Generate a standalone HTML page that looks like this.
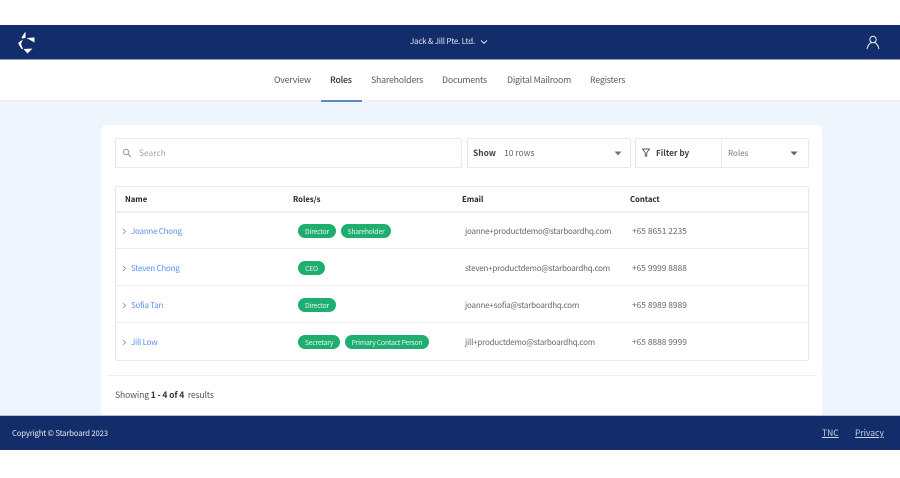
<!DOCTYPE html>
<html lang="en"><head><meta charset="utf-8"><title>Roles</title>
<style>
html,body{margin:0;padding:0;background:#fff}
#p{position:relative;width:900px;height:478px;overflow:hidden;background:#fff;font-family:"Noto Sans CJK SC","Liberation Sans",sans-serif;font-size:9px;color:#555;filter:blur(.25px)}
#p div,#p svg,#p a{position:absolute}
.t{white-space:nowrap;line-height:14px;height:14px}
.box{background:#fff;border:1px solid #e9e9e9;border-radius:2px;box-sizing:border-box}
.nav{font-size:8.8px;letter-spacing:-.22px;color:#5a5a5a;top:72.5px}
.th{font-size:7.7px;font-weight:700;color:#222;top:192.6px}
.nm{font-size:8px;letter-spacing:-.24px;color:#5c8ff5;margin-top:.8px}
.em{font-size:8px;letter-spacing:-.2px;color:#666;margin-top:.8px}
.ph{font-size:8.4px;color:#666}
.tag{background:#1fae6f;color:#e8f7f0;font-size:6.8px;letter-spacing:-.2px;height:14px;line-height:14px;border-radius:7px;text-align:center;white-space:nowrap}
.ln{background:#eeeeee;height:1px;left:116px;width:691.5px}
</style></head><body><div id="p">
<div style="left:0;top:25px;width:900px;height:34px;background:#122d69"></div>
<div style="left:0;top:59px;width:900px;height:1px;background:#8a97b8"></div>
<div style="left:0;top:101px;width:900px;height:315px;background:#eef5fd"></div>
<div style="left:0;top:100px;width:900px;height:2px;background:#eef0f3"></div>

<svg style="left:16px;top:31px" width="22" height="24" viewBox="0 0 22 24"><g fill="#fff"><path d="M9.500 .5 L5.500 6.500 L6 7.500 L9.500 7Z"/><path d="M10.500 7 L18.500 6.500 L18.500 11.500Z"/><path d="M7 8.500 L2.500 11.500 L2.500 13 L5.500 18 L7 18 L5 13Z"/><path d="M7.500 18 L16.500 17.500 L11.500 22.500Z"/></g></svg>

<div class="t" style="left:410px;top:35px;font-size:8px;letter-spacing:-.23px;color:#dfe5f0">Jack &amp; Jill Pte. Ltd.</div>
<svg style="left:480px;top:39px" width="8" height="6" viewBox="0 0 8 6"><path d="M1 1.500 L4 4.300 L7 1.500" fill="none" stroke="#dfe5f0" stroke-width="1"/></svg>
<svg style="left:866px;top:35px" width="14" height="15" viewBox="0 0 14 15"><circle cx="7" cy="4.500" r="3.200" fill="none" stroke="#eef1f7" stroke-width="1"/><path d="M1 14 C2 10 4 8 5.500 7.500 M13 14 C12 10 10 8 8.500 7.500" fill="none" stroke="#eef1f7" stroke-width="1"/></svg>

<div class="t nav" style="left:274px">Overview</div>
<div class="t nav" style="left:330px;color:#333;font-weight:500">Roles</div>
<div class="t nav" style="left:371px">Shareholders</div>
<div class="t nav" style="left:442px">Documents</div>
<div class="t nav" style="left:507px">Digital Mailroom</div>
<div class="t nav" style="left:590px">Registers</div>
<div style="left:321px;top:100px;width:41px;height:2px;background:#5f89c0"></div>

<div style="left:101px;top:125px;width:721px;height:291px;background:#fff;border-radius:5px 5px 0 5px"></div>

<div class="box" style="left:115px;top:138px;width:347px;height:30px"></div>
<svg style="left:122px;top:148px" width="10" height="10" viewBox="0 0 10 10"><circle cx="4" cy="4" r="2.700" fill="none" stroke="#999" stroke-width="1"/><path d="M6 6 L9 9" stroke="#999" stroke-width="1.200"/></svg>
<div class="t" style="left:139px;top:146px;font-size:8.400px;color:#a3a3a3">Search</div>

<div class="box" style="left:467px;top:138px;width:163.500px;height:30px"></div>
<div class="t" style="left:473px;top:146px;font-size:8.400px;font-weight:700;color:#444">Show</div>
<div class="t" style="left:504px;top:146.400px;font-size:8.500px;color:#666">10 rows</div>
<svg style="left:614px;top:151px" width="8" height="5" viewBox="0 0 8 5"><path d="M.5 .5 L7.500 .5 L4 4.500Z" fill="#777"/></svg>

<div class="box" style="left:635px;top:138px;width:173.500px;height:30px"></div>
<div style="left:721px;top:139px;width:1px;height:28px;background:#e9e9e9"></div>
<svg style="left:642px;top:148px" width="8" height="9" viewBox="0 0 8 9"><path d="M.5 1 L7.500 1 L4.800 4.500 L4.800 8 L3.200 8 L3.200 4.500Z" fill="none" stroke="#555" stroke-width=".9"/></svg>
<div class="t" style="left:656px;top:146.400px;font-size:8.200px;font-weight:700;color:#444">Filter by</div>
<div class="t" style="left:728px;top:146.500px;font-size:8px;color:#777">Roles</div>
<svg style="left:790px;top:151px" width="8" height="5" viewBox="0 0 8 5"><path d="M.5 .5 L7.500 .5 L4 4.500Z" fill="#666"/></svg>

<div class="box" style="left:115px;top:186px;width:693.500px;height:175px"></div>
<div class="ln" style="top:211px;height:2px"></div>
<div class="ln" style="top:248px"></div>
<div class="ln" style="top:285px"></div>
<div class="ln" style="top:322px"></div>
<div class="t th" style="left:125px">Name</div>
<div class="t th" style="left:293px">Roles/s</div>
<div class="t th" style="left:462px">Email</div>
<div class="t th" style="left:630px">Contact</div>

<svg style="left:122px;top:228px" width="5" height="7" viewBox="0 0 5 7"><path d="M1 1 L3.500 3.500 L1 6" fill="none" stroke="#888" stroke-width=".8"/></svg>
<div class="t nm" style="left:131px;top:224px">Joanne Chong</div>
<div class="tag" style="left:298px;top:224px;width:38px">Director</div>
<div class="tag" style="left:341px;top:224px;width:50px">Shareholder</div>
<div class="t em" style="left:465px;top:224px">joanne+productdemo@starboardhq.com</div>
<div class="t ph" style="left:632px;top:224px">+65 8651 2235</div>

<svg style="left:122px;top:265px" width="5" height="7" viewBox="0 0 5 7"><path d="M1 1 L3.500 3.500 L1 6" fill="none" stroke="#888" stroke-width=".8"/></svg>
<div class="t nm" style="left:131px;top:261px">Steven Chong</div>
<div class="tag" style="left:298px;top:261px;width:27px">CEO</div>
<div class="t em" style="left:465px;top:261px">steven+productdemo@starboardhq.com</div>
<div class="t ph" style="left:632px;top:261px">+65 9999 8888</div>

<svg style="left:122px;top:302px" width="5" height="7" viewBox="0 0 5 7"><path d="M1 1 L3.500 3.500 L1 6" fill="none" stroke="#888" stroke-width=".8"/></svg>
<div class="t nm" style="left:131px;top:298px">Sofia Tan</div>
<div class="tag" style="left:298px;top:298px;width:38px">Director</div>
<div class="t em" style="left:465px;top:298px">joanne+sofia@starboardhq.com</div>
<div class="t ph" style="left:632px;top:298px">+65 8989 8989</div>

<svg style="left:122px;top:339px" width="5" height="7" viewBox="0 0 5 7"><path d="M1 1 L3.500 3.500 L1 6" fill="none" stroke="#888" stroke-width=".8"/></svg>
<div class="t nm" style="left:131px;top:335px">Jill Low</div>
<div class="tag" style="left:298px;top:335px;width:42px">Secretary</div>
<div class="tag" style="left:345px;top:335px;width:84px">Primary Contact Person</div>
<div class="t em" style="left:465px;top:335px">jill+productdemo@starboardhq.com</div>
<div class="t ph" style="left:632px;top:335px">+65 8888 9999</div>

<div style="left:106px;top:375px;width:712px;height:1px;background:#f0f0f0"></div>
<div class="t" style="left:115px;top:388px;font-size:8.600px;letter-spacing:-.13px;color:#555">Showing <b style="font-weight:700;color:#333">1 - 4 of 4</b>&nbsp; results</div>

<div style="left:0;top:416px;width:900px;height:34px;background:#122d69"></div>
<div style="left:0;top:415px;width:900px;height:1px;background:#b8c0d4"></div>
<div class="t" style="left:12px;top:426.500px;font-size:7.800px;letter-spacing:-.2px;color:#e4e8f1">Copyright © Starboard 2023</div>
<div class="t" style="left:822px;top:426px;font-size:8.500px;color:#c9d2e6;text-decoration:underline">TNC</div>
<div class="t" style="left:855px;top:426px;font-size:8.500px;color:#c9d2e6;text-decoration:underline">Privacy</div>
</div></body></html>
